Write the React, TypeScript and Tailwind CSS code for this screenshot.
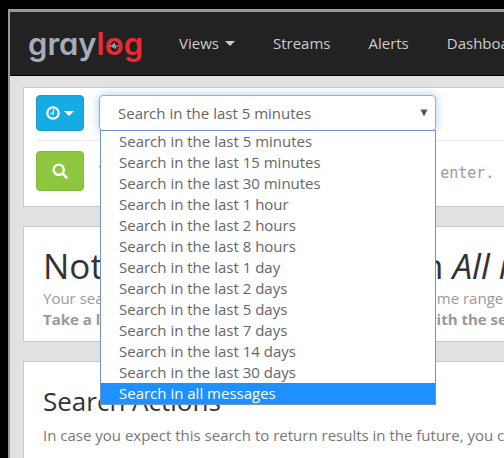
import React from "react";

const ranges = [
  "Search in the last 5 minutes",
  "Search in the last 15 minutes",
  "Search in the last 30 minutes",
  "Search in the last 1 hour",
  "Search in the last 2 hours",
  "Search in the last 8 hours",
  "Search in the last 1 day",
  "Search in the last 2 days",
  "Search in the last 5 days",
  "Search in the last 7 days",
  "Search in the last 14 days",
  "Search in the last 30 days",
  "Search in all messages",
];

function Logo() {
  return (
    <a href="#" aria-label="graylog" className="flex font-['Inter',sans-serif] text-[31px] leading-10 font-semibold [font-feature-settings:'cv11']">
      <span className="text-[#a5adbd]">gray</span>
      <span className="text-[#ed2a33]">l</span>
      <span className="relative text-[#ed2a33]">
        o
        <svg viewBox="0 0 10 8" className="absolute inset-x-0 top-[18px] mx-auto h-2 w-2" fill="none" stroke="#b5bdca" strokeWidth="1.2" strokeLinejoin="round">
          <path d="M0 4.3h2l1-2 1 4 1.3-6 1.2 7 1-4 .7 1H10" />
        </svg>
      </span>
      <span className="text-[#ed2a33]">g</span>
    </a>
  );
}

function Caret() {
  return <span className="inline-block border-x-[5px] border-t-[5px] border-x-transparent border-t-current" />;
}

function NavBar() {
  return (
    <nav className="flex h-16 items-center border-b border-black bg-[#222] text-[#ccc]">
      <div className="w-[169px] shrink-0 pl-[18px]">
        <Logo />
      </div>
      <div className="flex gap-[38px]">
        <button className="flex items-center gap-[6px]">
          Views <Caret />
        </button>
        <a href="#">Streams</a>
        <a href="#">Alerts</a>
        <a href="#">Dashboards</a>
      </div>
    </nav>
  );
}

function RangePicker() {
  return (
    <div className="relative w-[337px]">
      <select
        aria-label="Time range"
        defaultValue={ranges[0]}
        className="block h-9 w-full appearance-none rounded-[4px] border border-[#aaa] bg-white pl-[18px] text-[#666] shadow-[0_0_10px_rgba(102,175,233,0.6)] outline-none"
      >
        {ranges.map((r) => (
          <option key={r}>{r}</option>
        ))}
      </select>
      <svg viewBox="0 0 8 8" className="pointer-events-none absolute top-[14px] right-2 size-2" fill="#555">
        <path d="M.5.5h7L4 7.5z" />
      </svg>
      <ul role="listbox" aria-label="Time ranges" className="absolute top-[35px] right-0 left-px z-10 border border-[#6f93cf] bg-white text-[#666]">
        {ranges.map((r) => (
          <li
            key={r}
            role="option"
            aria-selected={r === "Search in all messages"}
            className="pl-[18px] aria-selected:bg-[#1e90ff] aria-selected:text-white"
          >
            {r}
          </li>
        ))}
      </ul>
    </div>
  );
}

function SearchBar() {
  return (
    <section className="border border-r-0 border-[#c9c9c9] bg-white pt-[7px] pb-[15px] pl-3">
      <div className="flex gap-[15px] border-b border-[#eaeaea] pb-[9px]">
        <button aria-label="Time range type" className="flex h-9 w-12 items-center justify-center gap-1 rounded-[4px] border border-[#159ed3] bg-[#16ace3] text-white">
          <svg viewBox="0 0 14 14" className="size-[14px]" fill="none" stroke="currentColor">
            <circle cx="7" cy="7" r="5.7" strokeWidth="2.2" />
            <path d="M7.5 3.5v4H4.5" strokeWidth="1.3" />
          </svg>
          <Caret />
        </button>
        <RangePicker />
      </div>
      <div className="flex gap-[15px] pt-[10px]">
        <button aria-label="Search" className="flex h-10 w-12 shrink-0 items-center justify-center rounded-[4px] border border-[#83bb38] bg-[#8dc63f] text-white">
          <svg viewBox="0 0 16 16" className="size-4" fill="none" stroke="currentColor" strokeLinecap="round">
            <circle cx="6.7" cy="6.7" r="5.1" strokeWidth="2.4" />
            <path d="M11 11l3.5 3.5" strokeWidth="2.6" />
          </svg>
        </button>
        <input
          aria-label="Search query"
          placeholder={'Type your search query here and press enter. ("not found" AND http) OR http_response_code:[400 TO 404]'}
          className="min-w-0 flex-1 -indent-0.5 pt-1 font-['DejaVu_Sans_Mono',monospace] outline-none placeholder:text-[#999]"
        />
      </div>
    </section>
  );
}

export default function App() {
  return (
    <div className="flex min-h-screen flex-col overflow-hidden bg-black pt-[9px] pl-2 font-['Open_Sans',sans-serif] text-[15px] leading-[21px] whitespace-nowrap">
      <div className="flex flex-1 flex-col border-t-3 border-l-2 border-[#999] bg-[#e2e2e2]">
        <NavBar />
        <main className="flex flex-1 flex-col gap-[19px] pt-[11px] pl-[13px]">
          <SearchBar />
          <section className="border border-r-0 border-[#c9c9c9] bg-white pt-[17px] pb-[11px] pl-[19px] text-[#999]">
            <h1 className="pb-px text-[35px] leading-[43px] text-[#333]">
              Nothing found in stream <em>All messages</em>
            </h1>
            <p>
              Your search returned no results, try changing the used time range or the search query.
            </p>
            <p className="font-bold">
              Take a look at the documentation if you need help with the search syntax or the time range selector.
            </p>
          </section>
          <section className="flex-1 border border-r-0 border-b-0 border-[#c9c9c9] bg-white pt-[23px] pl-[19px] text-[#777]">
            <h2 className="text-[26px] leading-8 text-[#333]">Search Actions</h2>
            <p className="pt-2">
              In case you expect this search to return results in the future, you can save it.
            </p>
          </section>
        </main>
      </div>
    </div>
  );
}
